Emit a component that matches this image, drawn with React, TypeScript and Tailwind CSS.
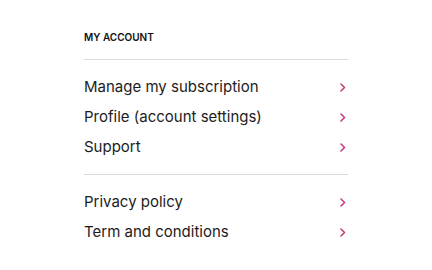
const groups = [
  ["Manage my subscription", "Profile (account settings)", "Support"],
  ["Privacy policy", "Term and conditions"],
];

function Chevron() {
  return (
    <svg width="6" height="9" viewBox="0 0 6 9" fill="none" className="shrink-0">
      <path d="M1 1l3.5 3.5L1 8" stroke="#c2417e" strokeWidth="1.6" strokeLinecap="round" strokeLinejoin="round" />
    </svg>
  );
}

export default function App() {
  return (
    <div className="min-h-[270px] bg-white font-['Inter',sans-serif]">
      <div className="mx-auto w-[264px] pt-[29px]">
        <h2 className="mb-[14px] text-[10px] font-semibold leading-4 text-[#111]">MY ACCOUNT</h2>
        {groups.map((items, i) => (
          <div key={i} className="border-t border-[#dcdcdc] py-3">
            {items.map((label) => (
              <a key={label} href="#" className="flex h-[30px] items-center justify-between pr-[2px] text-[15px] text-[#1c1c1c]">
                <span>{label}</span>
                <Chevron />
              </a>
            ))}
          </div>
        ))}
      </div>
    </div>
  );
}
